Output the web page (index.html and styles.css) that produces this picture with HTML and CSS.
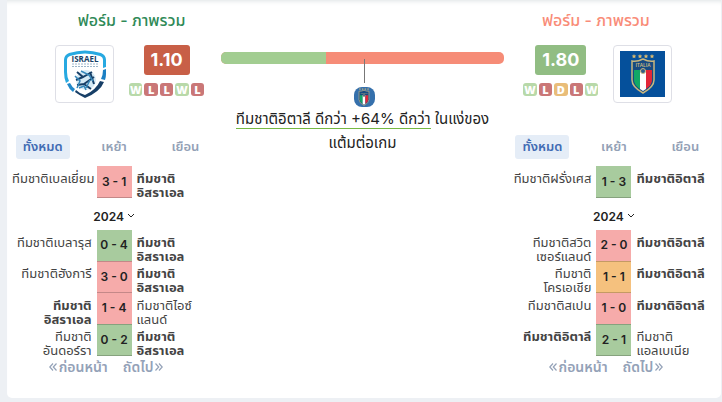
FILE: index.html
```html
<!DOCTYPE html>
<html lang="th">
<head>
<meta charset="utf-8">
<meta name="viewport" content="width=device-width, initial-scale=1">
<title>ฟอร์ม - ภาพรวม</title>
<link rel="stylesheet" href="styles.css">
</head>
<body>
<svg class="defs" aria-hidden="true">
  <symbol id="down" viewBox="0 0 8 6"><path d="M1 1l3 3 3-3" fill="none" stroke="currentColor"/></symbol>
  <symbol id="prev" viewBox="0 0 8 8"><path d="M4 .5L.8 4 4 7.500M7.500 .5L4.300 4l3.200 3.500" fill="none" stroke="currentColor" stroke-width="1.200"/></symbol>
  <symbol id="next" viewBox="0 0 8 8"><path d="M4 .5L7.200 4 4 7.500M.5 .5L3.700 4 .5 7.500" fill="none" stroke="currentColor" stroke-width="1.200"/></symbol>
  <symbol id="italy" viewBox="0 0 24 40">
    <path d="M1 7q5 1 11-2 6 3 11 2v19q0 7-11 13Q1 33 1 26z" fill="#174b82" stroke="#c9b67e" stroke-width="1.500"/>
    <path d="M3 16h6v19q-6-4-6-9z" fill="#12a866"/>
    <path d="M9 16h6v19l-3 2-3-2z" fill="#fff"/>
    <path d="M15 16h6v10q0 5-6 9z" fill="#e32638"/>
    <text x="12" y="13" class="italia-name">ITALIA</text>
    <circle cx="12" cy="17" r="2.500" fill="#315d88" stroke="#c9b67e"/>
    <path d="M3 0l.7 1.400 1.600.2-1.200 1.100.3 1.600L3 3.600l-1.400.7.300-1.600L.7 1.600l1.600-.2zM9 0l.7 1.400 1.600.2-1.200 1.100.3 1.600L9 3.600l-1.400.7.300-1.600-1.200-1.100 1.600-.2zM15 0l.7 1.400 1.600.2-1.200 1.100.3 1.600-1.400-.7-1.400.7.300-1.600-1.200-1.100 1.600-.2zM21 0l.7 1.400 1.600.2-1.200 1.100.3 1.600-1.400-.7-1.400.7.300-1.600-1.200-1.100 1.600-.2z" fill="#d9ba70"/>
  </symbol>
</svg>
<main class="card">
  <section class="team home">
    <h2>ฟอร์ม - ภาพรวม</h2>
    <div class="summary">
      <div class="logo">
        <svg viewBox="0 0 44 50" role="img" aria-label="Israel">
          <path d="M1 11q0-5 5-7Q22-1 38 4q5 2 5 7v7l-3 1V11q0-3-3-4Q22 2 7 7q-3 1-3 4v12q0 5 2 9l-3 2q-2-5-2-11z" fill="#27a9e1"/>
          <path d="M40 21l3-1v5q0 3-1 6l-4-1q2-4 2-9z" fill="#1b80c4"/>
          <path d="M4 35l3-1q2 4 5 6l-2 3q-4-3-6-8z" fill="#2189c9"/>
          <path d="M37 32l4 1q-4 10-19 16-6-3-10-6l1-2q4 4 9 5 11-5 15-14z" fill="#173f67"/>
          <text x="22" y="13" class="crest-name">ISRAEL</text>
          <path d="M9 15h27M9 17.500h26" stroke="#9cb6ca" stroke-dasharray="2 1" fill="none"/>
          <circle cx="23" cy="31" r="10" fill="#d5eaf5"/>
          <path d="M14 23l6 5 9-5M20 28l-7 3M21 35l10-7M21 35l-7 1M21 35l7 5M27 23l4 12" fill="none" stroke="#173f67" stroke-width="2"/>
          <path d="M12 27l5 5-3 7M18 22l8 4 4 6M16 39l5-2 2 4M27 31l-4 8" fill="none" stroke="#3688ba" stroke-width="1.500"/>
        </svg>
      </div>
      <div class="rating">
        <strong class="score low">1.10</strong>
        <div class="chips"><span class="w">W</span><span class="l">L</span><span class="l">L</span><span class="w">W</span><span class="l">L</span></div>
      </div>
    </div>
    <nav class="tabs"><button class="active">ทั้งหมด</button><button>เหย้า</button><button>เยือน</button></nav>
    <table class="recent">
      <tr><td><div>ทีมชาติเบลเยี่ยม</div></td><td class="loss">3 - 1</td><td><div class="own">ทีมชาติ<br>อิสราเอล</div></td></tr>
    </table>
    <button class="year">2024<svg><use href="#down"/></svg></button>
    <table class="season">
      <tr><td><div>ทีมชาติเบลารุส</div></td><td class="win">0 - 4</td><td><div class="own">ทีมชาติ<br>อิสราเอล</div></td></tr>
      <tr><td><div>ทีมชาติฮังการี</div></td><td class="loss">3 - 0</td><td><div class="own">ทีมชาติ<br>อิสราเอล</div></td></tr>
      <tr><td><div class="own">ทีมชาติ<br>อิสราเอล</div></td><td class="loss">1 - 4</td><td><div>ทีมชาติไอซ์<br>แลนด์</div></td></tr>
      <tr><td><div>ทีมชาติ<br>อันดอร์รา</div></td><td class="win">0 - 2</td><td><div class="own">ทีมชาติ<br>อิสราเอล</div></td></tr>
    </table>
    <div class="pager"><button><svg><use href="#prev"/></svg>ก่อนหน้า</button><button>ถัดไป<svg><use href="#next"/></svg></button></div>
  </section>

  <section class="compare">
    <div class="bar"><span class="share"></span></div>
    <div class="pointer"></div>
    <div class="mini"><svg><use href="#italy"/></svg></div>
    <p><span>ทีมชาติอิตาลี ดีกว่า +64% ดีกว่า</span> ในแง่ของ<br>แต้มต่อเกม</p>
  </section>

  <section class="team away">
    <h2>ฟอร์ม - ภาพรวม</h2>
    <div class="summary">
      <div class="rating">
        <strong class="score high">1.80</strong>
        <div class="chips"><span class="w">W</span><span class="l">L</span><span class="d">D</span><span class="l">L</span><span class="w">W</span></div>
      </div>
      <div class="logo"><div class="flag"><svg role="img" aria-label="Italia"><use href="#italy"/></svg></div></div>
    </div>
    <nav class="tabs"><button class="active">ทั้งหมด</button><button>เหย้า</button><button>เยือน</button></nav>
    <table class="recent">
      <tr><td><div>ทีมชาติฝรั่งเศส</div></td><td class="win">1 - 3</td><td><div class="own">ทีมชาติอิตาลี</div></td></tr>
    </table>
    <button class="year">2024<svg><use href="#down"/></svg></button>
    <table class="season">
      <tr><td><div>ทีมชาติสวิต<br>เซอร์แลนด์</div></td><td class="loss">2 - 0</td><td><div class="own">ทีมชาติอิตาลี</div></td></tr>
      <tr><td><div>ทีมชาติ<br>โครเอเชีย</div></td><td class="draw">1 - 1</td><td><div class="own">ทีมชาติอิตาลี</div></td></tr>
      <tr><td><div>ทีมชาติสเปน</div></td><td class="loss">1 - 0</td><td><div class="own">ทีมชาติอิตาลี</div></td></tr>
      <tr><td><div class="own">ทีมชาติอิตาลี</div></td><td class="win">2 - 1</td><td><div>ทีมชาติ<br>แอลเบเนีย</div></td></tr>
    </table>
    <div class="pager"><button><svg><use href="#prev"/></svg>ก่อนหน้า</button><button>ถัดไป<svg><use href="#next"/></svg></button></div>
  </section>
</main>
</body>
</html>
```
FILE: styles.css
```css
* { box-sizing: border-box; }
body {
  margin: 0;
  padding: 0 1px 4px 7px;
  background: #edf0f4;
  color: #222;
  font-family: Inter, "Noto Sans Thai", "Liberation Sans", sans-serif;
  font-size: 13px;
}
button { border: 0; padding: 0; background: none; font: inherit; color: inherit; white-space: nowrap; }
svg { display: block; }
.defs { width: 0; height: 0; position: absolute; }
.card {
  display: grid;
  grid-template-columns: 3fr 4fr 3fr;
  padding: 8px 0 20px;
  background: #fff;
  border-radius: 0 0 5px 5px;
  box-shadow: inset 0 5px 5px -4px #dde2e4;
}
h2 { margin: 0; font-size: 16px; line-height: 24px; font-weight: 500; text-align: center; }
.home h2 { padding-left: 35px; }
.home .summary { padding-left: 31px; }
.away h2 { padding-right: 36px; }
.away .summary { padding-right: 32px; }
.home h2 { color: #2f8a57; }
.away h2 { color: #f98c78; }
.summary { display: flex; justify-content: center; gap: 15px; height: 58px; margin-top: 13px; }
.logo { width: 59px; height: 58px; border: 1px solid #dedfe6; border-radius: 4px; display: grid; place-items: center; }
.logo > svg { width: 44px; height: 50px; }
.crest-name { font: 700 8px "Open Sans", sans-serif; fill: #173f67; text-anchor: middle; }
.italia-name { font: 600 5px "Open Sans", sans-serif; fill: #d3bd80; text-anchor: middle; }
.flag { width: 45px; height: 46px; background: #05509b; display: grid; place-items: center; }
.flag svg { width: 24px; height: 40px; }
.rating { display: flex; flex-direction: column; align-items: center; gap: 8px; }
.score { padding: 0 7px; border-radius: 3px; color: #fff; font-size: 18px; line-height: 30px; font-weight: 700; }
.low { background: #c85f47; }
.high { background: #91bd83; }
.chips { display: grid; grid-template-columns: repeat(5, 1fr); gap: 2px; width: 75px; }
.chips span { border-radius: 3px; color: #fff; font: 800 11px/13px "Open Sans", sans-serif; display: flex; justify-content: center; }
.w { background: #b8d9a9; }
.l { background: #ca7777; }
.d { background: #e9bd79; }
.tabs { display: grid; grid-template-columns: repeat(3, 1fr); justify-items: center; margin-top: 32px; color: #93a1b6; font-size: 13px; font-weight: 600; }
.tabs button { width: 54px; height: 24px; border-radius: 3px; }
.tabs .active { background: #e5edf7; color: #416bb3; }
table { width: 100%; border-collapse: collapse; table-layout: fixed; }
.recent { height: 32px; margin-top: 7px; }
.season { height: 126px; }
td { padding: 0 5px; vertical-align: top; color: #444; line-height: 14px; white-space: nowrap; }
td div { height: 25px; margin-top: 5px; }
td:first-child { text-align: right; }
td:nth-child(2) { width: 35px; padding: 0; vertical-align: middle; text-align: center; color: #222; font-size: 12px; font-weight: 600; border-bottom: 1px solid rgb(0 0 0 / 20%); }
.own { font-weight: 700; }
.win { background: #a8cb9e; }
.loss { background: #f6abaa; }
.draw { background: #f5c17e; }
.year { display: flex; align-items: center; justify-content: center; gap: 3px; width: 100%; height: 32px; padding-top: 4px; font-size: 12px; font-weight: 600; }
.year svg { width: 8px; height: 6px; }
.pager { display: flex; justify-content: center; gap: 15px; padding-right: 16px; color: #94a2b8; font-size: 14px; font-weight: 600; line-height: 22px; }
.pager button { display: flex; align-items: center; gap: 2px; }
.pager svg { width: 8px; height: 8px; }
.compare { padding: 44px 3px 0 0; }
.bar { height: 12px; border-radius: 5px; overflow: hidden; background: #f68c77; }
.share { display: block; width: 37%; height: 100%; background: #a2cd91; }
.pointer { width: 1px; height: 24px; margin: -5px auto 4px; background: #777; position: relative; left: 2px; }
.mini { width: 21px; height: 20px; margin: 0 auto; border-radius: 8px; background: #3570ac; display: grid; place-items: center; position: relative; left: 2px; }
.mini svg { width: 12px; height: 18px; }
.compare p { margin: 0; font-size: 15px; line-height: 24px; text-align: center; white-space: nowrap; }
.compare p span { border-bottom: 1px solid #75b843; }
```
